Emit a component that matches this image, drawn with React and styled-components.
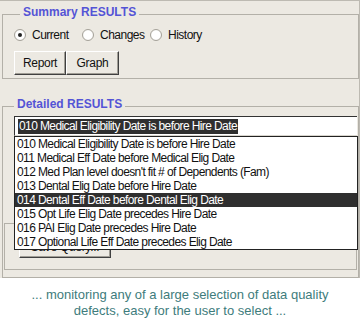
import styled, {createGlobalStyle} from 'styled-components';

const GlobalStyle = createGlobalStyle`
    html, body {
        margin: 0;
        padding: 0;
        background: #fff;
    }

    body {
        font-family: "Liberation Sans", Arial, sans-serif;
    }
`;

const Page = styled.div`
    width: 360px;
    height: 329px;
    overflow: hidden;
`;

const Frame = styled.div`
    box-sizing: border-box;
    width: 360px;
    background: #ece9e2;
    border-top: 1px solid #bdbab2;
    border-right: 1px solid #bdbab2;
    padding: 4px 0 0 2px;
`;

const Group = styled.fieldset`
    margin: 0;
    min-width: 0;
    border: 1px solid #b3b0a8;
    padding: ${p => p.$pad || '0'};
    margin-top: ${p => p.$top || '0'};
`;

const Legend = styled.legend`
    font-size: 12px;
    line-height: 14px;
    font-weight: bold;
    color: #5454d6;
    padding: 0 3px 5px;
    margin-left: ${p => p.$indent || '6px'};
`;

const RadioRow = styled.div`
    display: flex;
    align-items: center;
    height: 14px;
`;

const RadioLabel = styled.label`
    display: flex;
    align-items: center;
    gap: 6px;
    width: ${p => p.$w || '68px'};
    font-size: 12px;
    letter-spacing: -0.5px;
    color: #111;
`;

const RadioDot = styled.span`
    box-sizing: border-box;
    width: 12px;
    height: 12px;
    border-radius: 50%;
    border: 1px solid #a5a29a;
    background: radial-gradient(circle, #fff 55%, #e4e2dc 100%);
    display: flex;
    align-items: center;
    justify-content: center;

    &::after {
        content: '';
        width: 4px;
        height: 4px;
        border-radius: 50%;
        background: ${p => (p.$on ? '#222' : 'transparent')};
    }
`;

const ButtonRow = styled.div`
    display: flex;
    margin-top: 9px;
`;

const Button = styled.button`
    box-sizing: border-box;
    width: ${p => p.$w || '52px'};
    height: ${p => p.$h || '24px'};
    margin: 0;
    padding: 0;
    background: #ece9e2;
    border: 1px solid;
    border-color: #fff #404040 #404040 #fff;
    box-shadow: inset -1px -1px 0 #a09d95;
    font-family: "Liberation Sans", Arial, sans-serif;
    font-size: 12px;
    letter-spacing: -0.3px;
    color: #111;
`;

const ComboWrap = styled.div`
    position: relative;
    margin: 0 1px 0 11px;
`;

const Combo = styled.div`
    box-sizing: border-box;
    height: 20px;
    background: #fff;
    border-top: 1px solid #333;
    border-left: 1px solid #333;
    border-bottom: 1px solid #d8d5cd;
    padding: 1px 0 0 2px;
    display: flex;
    align-items: center;
`;

const ComboText = styled.span`
    background: #2f2f2f;
    color: #fff;
    font-size: 12px;
    letter-spacing: -0.6px;
    line-height: 15px;
    padding: 0 1px;
    border-left: 1px solid #fff;
`;

const List = styled.ul`
    position: absolute;
    top: 100%;
    left: 0;
    right: -1px;
    margin: 0;
    padding: 0;
    list-style: none;
    background: #fff;
    border: 1px solid #222;
    z-index: 2;
`;

const Item = styled.li`
    height: 14px;
    line-height: 14px;
    padding-left: 2px;
    font-size: 12px;
    letter-spacing: -0.6px;
    white-space: nowrap;
    color: ${p => (p.$active ? '#fff' : '#111')};
    background: ${p => (p.$active ? '#2f2f2f' : 'transparent')};
`;

const InnerBox = styled.div`
    margin: 87px 1px 0 1px;
    border: 1px solid #b3b0a8;
    padding: 12px 0 11px 14px;
`;

const Caption = styled.p`
    margin: 9px 0 0;
    text-align: center;
    font-size: 13px;
    line-height: 16px;
    color: #3e7c7c;
`;

const defects = [
    '010 Medical Eligibility Date is before Hire Date',
    '011 Medical Eff Date before Medical Elig Date',
    "012 Med Plan level doesn't fit # of Dependents (Fam)",
    '013 Dental Elig Date before Hire Date',
    '014 Dental Eff Date before Dental Elig Date',
    '015 Opt Life Elig Date precedes Hire Date',
    '016 PAI Elig Date precedes Hire Date',
    '017 Optional Life Eff Date precedes Elig Date',
];

export default function App() {
    return (
        <Page>
            <GlobalStyle/>
            <Frame>
                <Group $pad="4px 0 3px 11px">
                    <Legend>Summary RESULTS</Legend>
                    <RadioRow>
                        <RadioLabel><RadioDot $on/>Current</RadioLabel>
                        <RadioLabel><RadioDot/>Changes</RadioLabel>
                        <RadioLabel><RadioDot/>History</RadioLabel>
                    </RadioRow>
                    <ButtonRow>
                        <Button>Report</Button>
                        <Button $w="53px">Graph</Button>
                    </ButtonRow>
                </Group>
                <Group $top="18px" $pad="0 0 7px 0">
                    <Legend $indent="11px">Detailed RESULTS</Legend>
                    <ComboWrap>
                        <Combo>
                            <ComboText>{defects[0]}</ComboText>
                        </Combo>
                        <List>
                            {defects.map((d, i) => (
                                <Item key={d} $active={i === 4}>{d}</Item>
                            ))}
                        </List>
                    </ComboWrap>
                    <InnerBox>
                        <Button $w="92px" $h="22px">Save Query...</Button>
                    </InnerBox>
                </Group>
            </Frame>
            <Caption>
                ... monitoring any of a large selection of data quality<br/>
                defects, easy for the user to select ...
            </Caption>
        </Page>
    );
}
